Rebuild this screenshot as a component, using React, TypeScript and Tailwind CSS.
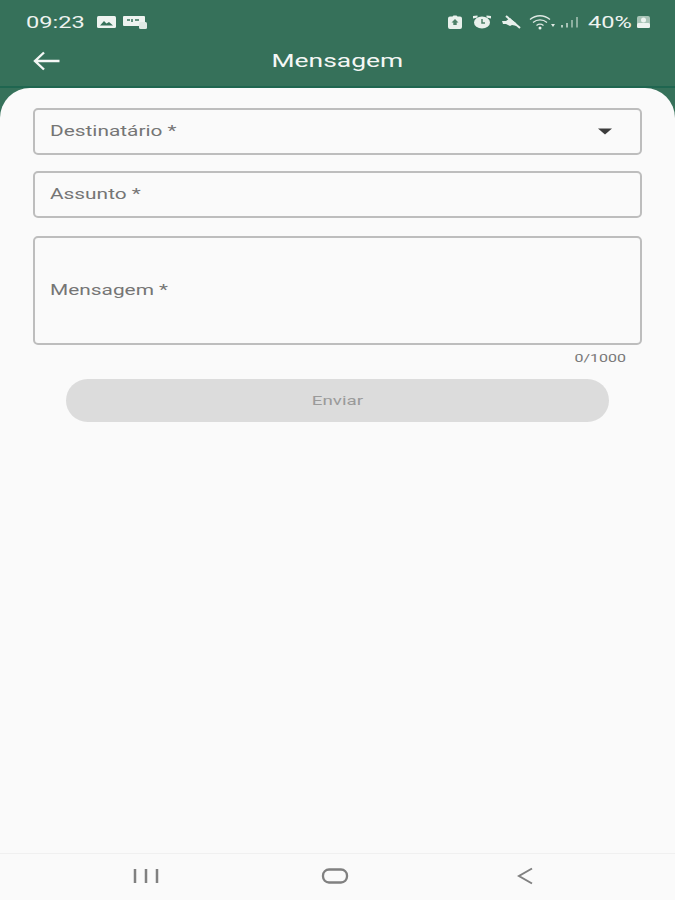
const font = { fontFamily: 'Roboto, "Liberation Sans", sans-serif' };

function StatusIcons() {
  return (
    <div className="flex items-center">
      {/* camera / upload */}
      <svg width="16" height="15" viewBox="0 0 16 15" className="mr-[9px]">
        <path fill="#e9f0ec" d="M3 1.500h2.500L6.500.5h3l1 1H13a2 2 0 0 1 2 2V12a2 2 0 0 1-2 2H3a2 2 0 0 1-2-2V3.500a2 2 0 0 1 2-2z" />
        <path fill="#4d8068" d="M8 4l3.500 3.500H9.700V10H6.300V7.500H4.500z" />
      </svg>
      {/* alarm */}
      <svg width="20" height="14" viewBox="0 0 20 14" className="mr-[9px]">
        <path fill="#e9f0ec" d="M1 1 5.500.5v2L1 3.500zM19 1 14.500.5v2L19 3.500z" />
        <ellipse cx="10" cy="7.500" rx="8" ry="6" fill="#e9f0ec" />
        <path stroke="#4d8068" strokeWidth="1.500" fill="none" d="M10 4v4h3" />
      </svg>
      {/* muted */}
      <svg width="20" height="14" viewBox="0 0 20 14" className="mr-[8px]">
        <path fill="#e9f0ec" d="M1 6h4l4-3 2 2 4 3 1 3-5-1-2 1-4-2H2z" />
        <path stroke="#e9f0ec" strokeWidth="2" d="M5 1l14 12" />
      </svg>
      {/* wifi */}
      <svg width="26" height="15" viewBox="0 0 26 15" className="mr-[6px]">
        <g fill="none" stroke="#dfe9e4" strokeWidth="1.300">
          <path d="M1 4.500c6-5 14-5 20 0" />
          <path d="M4 7.500c4-3.500 10-3.500 14 0" />
          <path d="M7.500 10.500c2-1.500 5-1.500 7 0" />
        </g>
        <circle cx="11" cy="13" r="1.500" fill="#eef3f0" />
        <path fill="#dfe9e4" d="M22 9h4l-2 3z" />
      </svg>
      {/* signal */}
      <svg width="18" height="12" viewBox="0 0 18 12" className="mr-[9px]">
        <rect x="0" y="9" width="2" height="2.500" fill="#b5cdc1" />
        <rect x="5" y="7" width="2" height="4.500" fill="#a9c4b7" />
        <rect x="10" y="4" width="2" height="7.500" fill="#8db0a0" />
        <rect x="15" y="1" width="2" height="10.500" fill="#8db0a0" />
      </svg>
      <span className="w-[48px] origin-left scale-x-[1.39] text-[17px] leading-none text-[#eef3f0]">40%</span>
      {/* battery */}
      <svg width="15" height="14" viewBox="0 0 15 14">
        <rect x="1" y="1" width="13" height="12" rx="2" fill="#a9c4b7" />
        <rect x="1" y="8" width="13" height="5" rx="1.500" fill="#eef3f0" />
        <circle cx="7.500" cy="5" r="2.500" fill="#eef3f0" />
      </svg>
    </div>
  );
}

function Field({ label, className, children }: { label: string; className: string; children?: React.ReactNode }) {
  return (
    <div className={`flex items-center justify-between rounded-[5px] border-2 border-[#bdbdbd] pl-[15px] ${className}`}>
      <span className="origin-left scale-x-[1.39] pb-px text-[15px] leading-none text-[#757575]">{label}</span>
      {children}
    </div>
  );
}

export default function App() {
  return (
    <div className="flex h-[900px] w-[675px] flex-col overflow-hidden bg-[#36715a]" style={font}>
      {/* Status bar + app bar */}
      <div className="h-[88px] shrink-0 border-b-2 border-[#1f6650] bg-[#36715a]">
        <div className="flex h-[44px] items-center justify-between pl-[26px] pr-[24px]">
          <div className="flex items-center">
            <span className="w-[71px] origin-left scale-x-[1.39] text-[17px] leading-none text-[#eef3f0]">09:23</span>
            <svg width="19" height="12" viewBox="0 0 19 12" className="mr-[7px]">
              <rect width="19" height="12" rx="1.500" fill="#eef3f0" />
              <path fill="#36715a" d="M3 9.500 7 5l2.500 2.500L12 6l4 3.500z" />
            </svg>
            <svg width="24" height="13" viewBox="0 0 24 13">
              <rect width="22" height="10" rx="1" fill="#eef3f0" />
              <rect x="16" y="6" width="8" height="7" rx="1.500" fill="#dfe9e4" />
              <path stroke="#36715a" strokeWidth="1.500" d="M4 4h3M9 3v3M12 4h4" />
            </svg>
          </div>
          <StatusIcons />
        </div>
        <div className="relative flex h-[32px] items-center justify-center">
          <svg width="28" height="20" viewBox="0 0 28 20" className="absolute left-[33px] top-[7px]">
            <path d="M26.500 10H2M11 1.500 2 10l9 8.500" fill="none" stroke="#f4f7f5" strokeWidth="2.400" />
          </svg>
          <span className="scale-x-[1.39] text-[19px] leading-none text-[#f4f7f5]">Mensagem</span>
        </div>
      </div>

      {/* Form sheet */}
      <div className="flex-1 rounded-t-[30px] bg-[#fafafa] px-[33px] pt-[20px]">
        <Field label="Destinatário *" className="h-[47px] pr-[27px]">
          <svg width="16" height="7" viewBox="0 0 16 7">
            <path d="M1 0.500h14L8 6.500z" fill="#3c3c3c" />
          </svg>
        </Field>
        <Field label="Assunto *" className="mt-[16px] h-[47px]" />
        <Field label="Mensagem *" className="mt-[18px] h-[109px]" />
        <div className="mt-[7px] flex h-[12px] justify-end pr-[16px]">
          <span className="origin-right scale-x-[1.39] text-[11.500px] leading-[12px] text-[#777777]">0/1000</span>
        </div>
        <div className="mx-[33px] mt-[15px] flex h-[43px] items-center justify-center rounded-full bg-[#dcdcdc]">
          <span className="scale-x-[1.39] text-[13.500px] leading-none text-[#9a9a9a]">Enviar</span>
        </div>
      </div>

      {/* Android navigation bar */}
      <div className="flex h-[47px] shrink-0 items-center border-t border-[#f0f0f0] bg-[#fafafa] pb-[3px] pl-[133px]">
        <svg width="26" height="16" viewBox="0 0 26 16">
          <path d="M2 1v14M13 1v14M24 1v14" stroke="#808080" strokeWidth="2.500" />
        </svg>
        <svg width="28" height="18" viewBox="0 0 28 18" className="ml-[162px]">
          <rect x="2" y="2.500" width="24" height="13" rx="6" fill="none" stroke="#808080" strokeWidth="2.300" />
        </svg>
        <svg width="16" height="18" viewBox="0 0 16 18" className="ml-[168px]">
          <path d="M15 1.500 2 9l13 7.500" fill="none" stroke="#808080" strokeWidth="2" />
        </svg>
      </div>
    </div>
  );
}
